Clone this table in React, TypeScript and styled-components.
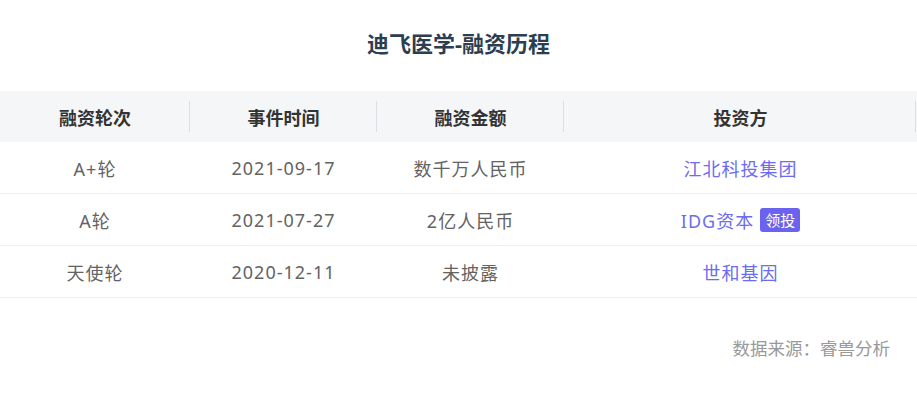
import React from 'react';
import styled, { createGlobalStyle } from 'styled-components';

interface Round {
  round: string;
  date: string;
  amount: string;
  investor: string;
  lead?: boolean;
}

const rounds: Round[] = [
  { round: 'A+轮', date: '2021-09-17', amount: '数千万人民币', investor: '江北科投集团' },
  { round: 'A轮', date: '2021-07-27', amount: '2亿人民币', investor: 'IDG资本', lead: true },
  { round: '天使轮', date: '2020-12-11', amount: '未披露', investor: '世和基因' },
];

const GlobalStyle = createGlobalStyle`
  body {
    margin: 0;
    background: #fff;
    font-family: "Noto Sans", "Noto Sans CJK SC", sans-serif;
  }
`;

const Page = styled.div`
  width: 917px;
  height: 396px;
  display: flex;
  flex-direction: column;
`;

const Title = styled.h2`
  margin: 0;
  height: 91px;
  display: flex;
  align-items: center;
  justify-content: center;
  padding-bottom: 8px;
  box-sizing: border-box;
  font-size: 22px;
  font-weight: 700;
  color: #2c3e50;
`;

const Table = styled.div`
  display: grid;
  grid-template-columns: 190px 187px 187px 1fr;
`;

const HeadCell = styled.div<{ $last?: boolean }>`
  height: 51px;
  background: #f5f6f8;
  display: flex;
  align-items: center;
  justify-content: center;
  position: relative;
  font-size: 18px;
  font-weight: 700;
  color: #333;

  &::after {
    content: '';
    position: absolute;
    right: ${({ $last }) => ($last ? '1px' : '0')};
    top: 10px;
    bottom: 10px;
    width: 1px;
    background: #dcdfe6;
  }
`;

const Cell = styled.div`
  height: 51px;
  border-bottom: 1px solid #ebeef5;
  display: flex;
  align-items: center;
  justify-content: center;
  gap: 6px;
  font-size: 18px;
  letter-spacing: 1px;
  color: #636363;
`;

const Investor = styled.span`
  color: #6c6cf0;
`;

const LeadBadge = styled.span`
  background: #6b62ef;
  color: #fff;
  font-size: 15px;
  letter-spacing: 0;
  line-height: 24px;
  padding: 0 5px;
  border-radius: 3px;
`;

const Source = styled.div`
  margin-top: 37px;
  padding-right: 27px;
  text-align: right;
  font-size: 17.5px;
  color: #999;
`;

export default function App() {
  return (
    <Page>
      <GlobalStyle />
      <Title>迪飞医学-融资历程</Title>
      <Table>
        <HeadCell>融资轮次</HeadCell>
        <HeadCell>事件时间</HeadCell>
        <HeadCell>融资金额</HeadCell>
        <HeadCell $last>投资方</HeadCell>
        {rounds.map((r) => (
          <React.Fragment key={r.date}>
            <Cell>{r.round}</Cell>
            <Cell>{r.date}</Cell>
            <Cell>{r.amount}</Cell>
            <Cell>
              <Investor>{r.investor}</Investor>
              {r.lead && <LeadBadge>领投</LeadBadge>}
            </Cell>
          </React.Fragment>
        ))}
      </Table>
      <Source>数据来源：睿兽分析</Source>
    </Page>
  );
}
